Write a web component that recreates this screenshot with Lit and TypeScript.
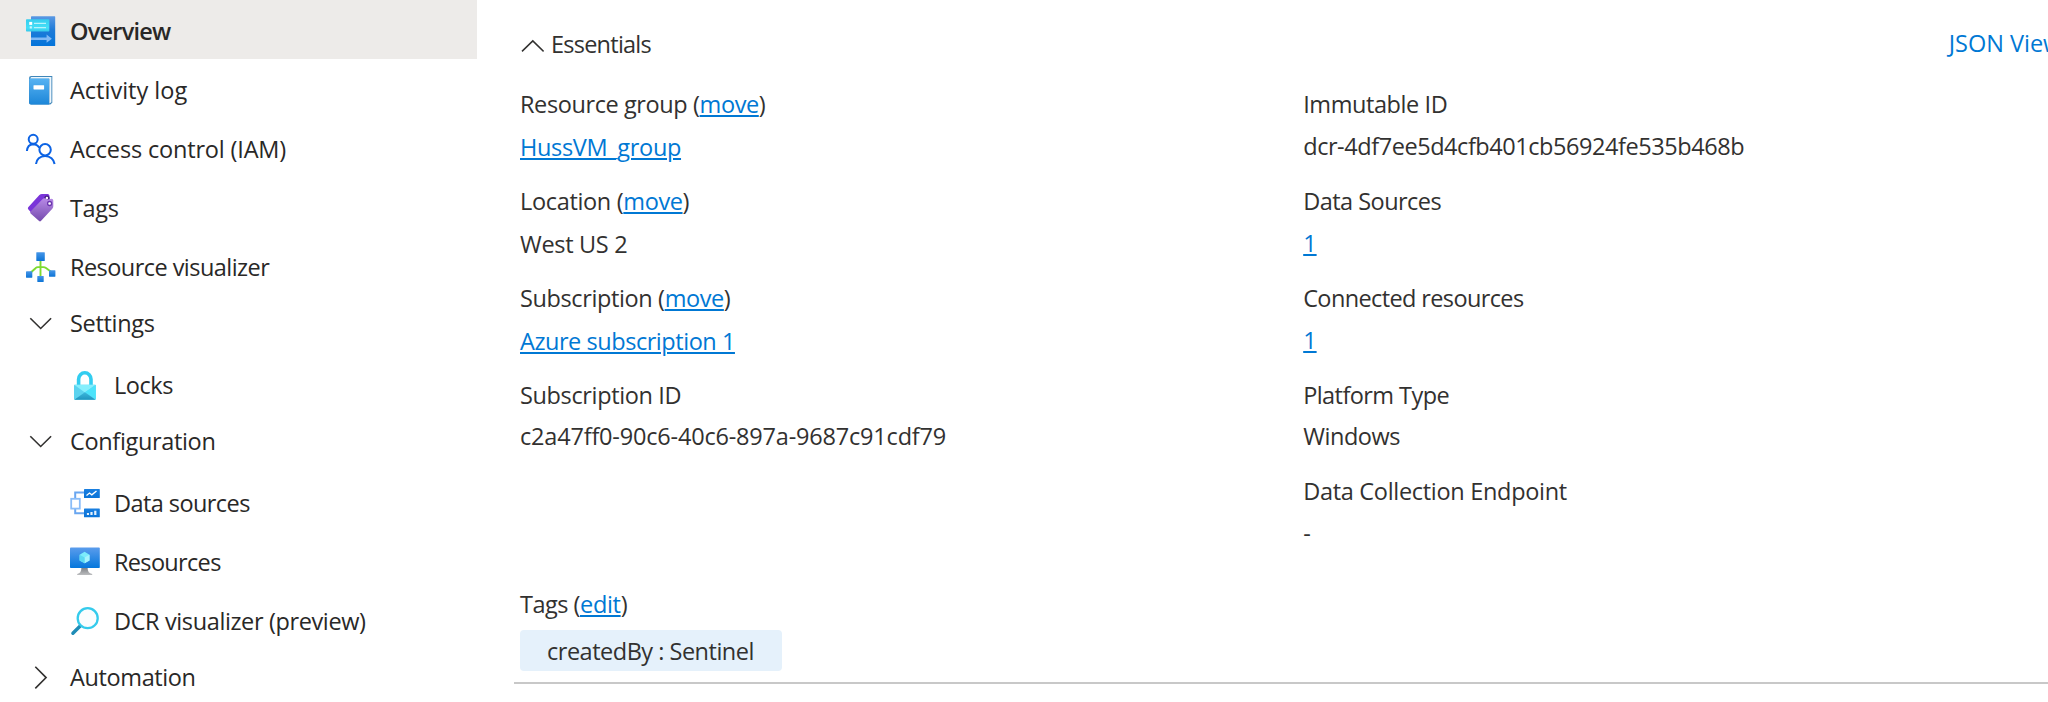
import { LitElement, html, svg, css, nothing, type SVGTemplateResult } from "lit";
import { styleMap } from "lit/directives/style-map.js";

const icons: Record<string, SVGTemplateResult> = {
  overview: svg`
    <defs>
      <linearGradient id="g" x1="0" y1="0" x2="0" y2="1"><stop offset="0" stop-color="#5a98e3"/><stop offset=".45" stop-color="#1f7bd8"/><stop offset="1" stop-color="#0374da"/></linearGradient>
      <linearGradient id="c" x1="0" y1="0" x2="0" y2="1"><stop offset="0" stop-color="#36cdee"/><stop offset=".7" stop-color="#45e0f8"/><stop offset="1" stop-color="#36c8ea"/></linearGradient>
    </defs>
    <rect x="5" y=".3" width="24.2" height="29.7" rx=".6" fill="url(#g)"/>
    <rect x="0" y="3.3" width="23.3" height="12.2" rx=".7" fill="url(#c)"/>
    <rect x="3.2" y="5.9" width="3" height="3" fill="#fff"/>
    <rect x="3.7" y="10.3" width="2.2" height="2.2" fill="#c9f6fd"/>
    <path d="M8 7.4H20M8 11.6H20" stroke="#b8f3fc" stroke-width="1.3"/>
    <path d="M5 21.5H20.6V18.6L25.9 22.7L20.6 26.8V24H5Z" fill="#7fb8f5"/>`,
  log: svg`
    <defs><linearGradient id="g" x1="0" y1="0" x2="0" y2="1"><stop offset="0" stop-color="#56b2f2"/><stop offset="1" stop-color="#1c86d8"/></linearGradient></defs>
    <path d="M5.2 1H26.3V27.8L24.3 29.6H5Q3 29.6 3 27.6V3.2Q3 1 5.2 1Z" fill="#3f86b9"/>
    <path d="M5.3 2.1H25.4V27.2L23.4 28.6V3.8H4.3Q4.3 2.5 5.3 2.1Z" fill="#eef6fc"/>
    <path d="M3.2 3.6H23V29.6H5Q3.2 29.6 3.2 27.8Z" fill="url(#g)"/>
    <rect x="7.5" y="10.2" width="10.6" height="4.3" rx=".4" fill="#fff"/>`,
  people: svg`
    <g fill="none" stroke="#0c63e4" stroke-width="2">
      <circle cx="7.2" cy="5.3" r="4.5"/>
      <path d="M.9 17C1.2 13.2 3.5 10.4 7.2 10.2C10 10.2 12 11.6 13.3 13.8"/>
      <circle cx="19.1" cy="15.8" r="5.7"/>
      <path d="M10 30C10.4 25.4 14 22 19.1 22S27.9 25.4 28.6 30"/>
    </g>`,
  tags: svg`
    <defs><linearGradient id="g" x1="0" y1="0" x2="0" y2="1"><stop offset="0" stop-color="#b88ae6"/><stop offset="1" stop-color="#744aad"/></linearGradient></defs>
    <path d="M2.2 14.2L13.4 2.1Q14.4 1 16 1H21.7Q23.3 1 23.4 2.6L23.8 7L6 20.4L2.2 16.2Q1.5 15.2 2.2 14.2Z" fill="#7a35d9"/>
    <circle cx="20.9" cy="5" r="1.9" fill="#fff" stroke="#431f80" stroke-width="1.4"/>
    <path d="M4.6 18.6L16.4 6.3Q17.4 5.2 19 5.3L22 6.5L25.5 5.8Q27.3 6 27.3 7.6V13.2Q27.3 14.6 26.3 15.7L14.9 28.1Q14 29 13.1 28.1L4.6 20.4Q3.8 19.5 4.6 18.6Z" fill="url(#g)"/>
    <circle cx="23.6" cy="10.5" r="2" fill="#fff" stroke="#6b36ae" stroke-width="1.3"/>`,
  visualizer: svg`
    <defs><linearGradient id="g" x1="0" y1="0" x2="0" y2="1"><stop offset="0" stop-color="#4796e8"/><stop offset="1" stop-color="#0c74d6"/></linearGradient></defs>
    <path d="M14.5 9V24M4.8 20.5L9.5 16.2Q10.6 15.1 12 15.1H17.3Q18.8 15.1 20 16L25 19.8" fill="none" stroke="#7ddb2f" stroke-width="1.9"/>
    <rect x="10.3" y=".3" width="8.5" height="8.6" rx=".4" fill="url(#g)"/>
    <rect x="0" y="19.3" width="6.3" height="6.4" rx=".4" fill="url(#g)"/>
    <rect x="23" y="18.3" width="6.4" height="6.4" rx=".4" fill="url(#g)"/>
    <rect x="11.3" y="23.9" width="6.4" height="6.1" rx=".4" fill="url(#g)"/>`,
  down: svg`<path d="M4.3 10.3L14.7 20.5L25.1 10.3" fill="none" stroke="#323130" stroke-width="1.6"/>`,
  right: svg`<path d="M9.3 4.8L20.1 15.6L9.3 26.4" fill="none" stroke="#323130" stroke-width="1.6"/>`,
  lock: svg`
    <defs><linearGradient id="g" x1="0" y1="0" x2="0" y2="1"><stop offset="0" stop-color="#3cb8dc"/><stop offset="1" stop-color="#2095bf"/></linearGradient></defs>
    <path d="M8.6 15.5V9.2A6.2 6.4 0 0 1 21 9.2V15.5" fill="none" stroke="#32cdf0" stroke-width="3.6"/>
    <rect x="4" y="14.8" width="21.8" height="15" rx=".7" fill="#5bd3ef"/>
    <path d="M4.2 14.8H25.6L14.9 22.4Z" fill="#86effd"/>
    <path d="M25.8 15V29.6L14.9 22.3Z" fill="#4ce3fb"/>
    <path d="M4.3 29.8L14.9 22.2L25.5 29.8Z" fill="url(#g)"/>`,
  sources: svg`
    <defs><linearGradient id="g" x1="0" y1="0" x2="0" y2="1"><stop offset="0" stop-color="#1a7fe0"/><stop offset="1" stop-color="#0a74d8"/></linearGradient></defs>
    <path d="M14.5 4.6H5.2V10M5.2 21V25.2H14.5" fill="none" stroke="#69a6f0" stroke-width="2"/>
    <rect x="1.2" y="10.8" width="8.6" height="9.8" fill="#fff" stroke="#8abdf8" stroke-width="1.8"/>
    <rect x="14" y="1" width="15.8" height="9" rx=".6" fill="url(#g)"/>
    <rect x="14" y="20.5" width="15.8" height="8.8" rx=".6" fill="url(#g)"/>
    <path d="M16.5 7.4L19.5 5.1L21.8 6.8L26.5 2.9" fill="none" stroke="#fff" stroke-width="1.3"/>
    <path d="M16.9 25h2.1v2.1h-2.1zM20.4 24h2.2v3.1h-2.2zM24.2 22.8h2.2v4.3h-2.2z" fill="#e6f2fd"/>`,
  monitor: svg`
    <defs>
      <linearGradient id="g" x1="0" y1="0" x2="0" y2="1"><stop offset="0" stop-color="#5a9cec"/><stop offset="1" stop-color="#0577dc"/></linearGradient>
      <linearGradient id="s" x1="0" y1="0" x2="0" y2="1"><stop offset="0" stop-color="#808387"/><stop offset="1" stop-color="#bcbdbf"/></linearGradient>
    </defs>
    <path d="M11.4 20.8H17.6Q17.6 26.6 22.2 26.9V28.1H7.2V26.9Q11.4 26.6 11.4 20.8Z" fill="url(#s)"/>
    <rect x="0" y=".6" width="29.8" height="20.4" rx=".8" fill="url(#g)"/>
    <path d="M14.6 4.8L19.5 7.7V13.4L14.6 16.3L9.6 13.4V7.7Z" fill="#7cebfb"/>
    <path d="M14.6 10.5L19.5 7.7V13.4L14.6 16.3Z" fill="#a6f3fd"/>
    <path d="M14.6 10.5L9.6 7.7V13.4L14.6 16.3Z" fill="#5cd9f2"/>`,
  magnifier: svg`
    <path d="M10.2 20L2.9 27.3" stroke="#1f8cb6" stroke-width="3.4" stroke-linecap="round"/>
    <circle cx="17.7" cy="12.2" r="10" fill="#fafdfe" stroke="#35cbec" stroke-width="2.3"/>`,
};

interface Entry { icon: string; text: string; ls: number; kind?: "active" | "sub" | "head" }
const menu: Entry[] = [
  { icon: "overview", text: "Overview", ls: -0.77, kind: "active" },
  { icon: "log", text: "Activity log", ls: 0 },
  { icon: "people", text: "Access control (IAM)", ls: -0.17 },
  { icon: "tags", text: "Tags", ls: -0.33 },
  { icon: "visualizer", text: "Resource visualizer", ls: -0.55 },
  { icon: "down", text: "Settings", ls: -0.32, kind: "head" },
  { icon: "lock", text: "Locks", ls: -0.46, kind: "sub" },
  { icon: "down", text: "Configuration", ls: -0.34, kind: "head" },
  { icon: "sources", text: "Data sources", ls: -0.57, kind: "sub" },
  { icon: "monitor", text: "Resources", ls: -0.67, kind: "sub" },
  { icon: "magnifier", text: "DCR visualizer (preview)", ls: -0.38, kind: "sub" },
  { icon: "right", text: "Automation", ls: -0.38, kind: "head" },
];

interface Field { label: string; ls: number; action?: string; value: string; vls: number; link?: boolean; drop?: boolean }
const left: Field[] = [
  { label: "Resource group", ls: -0.4, action: "move", value: "HussVM_group", vls: -0.32, link: true, drop: true },
  { label: "Location", ls: -0.33, action: "move", value: "West US 2", vls: -0.32, drop: true },
  { label: "Subscription", ls: -0.38, action: "move", value: "Azure subscription 1", vls: -0.45, link: true, drop: true },
  { label: "Subscription ID", ls: -0.36, value: "c2a47ff0-90c6-40c6-897a-9687c91cdf79", vls: -0.19 },
];
const right: Field[] = [
  { label: "Immutable ID", ls: -0.42, value: "dcr-4df7ee5d4cfb401cb56924fe535b468b", vls: -0.44 },
  { label: "Data Sources", ls: -0.53, value: "1", vls: 0, link: true },
  { label: "Connected resources", ls: -0.62, value: "1", vls: 0, link: true },
  { label: "Platform Type", ls: -0.57, value: "Windows", vls: -0.45 },
  { label: "Data Collection Endpoint", ls: -0.3, value: "-", vls: 0 },
];

const track = (ls: number) => styleMap({ letterSpacing: `${ls}px` });

class NavItem extends LitElement {
  static properties = { entry: { attribute: false } };
  declare entry: Entry;
  static styles = css`
    :host { display: block; }
    .row { display: flex; align-items: center; box-sizing: border-box; height: 59px; padding-left: 26px; gap: 14px; color: #292827; }
    .active { background: #edebe9; font-weight: 600; }
    .sub { padding-left: 70px; }
    .head { padding-bottom: 6px; }
    svg { width: 30px; height: 30px; margin-top: 3px; flex: none; overflow: visible; }
    .text { line-height: 32px; white-space: nowrap; padding-top: 3px; }
  `;
  render() {
    const e = this.entry;
    return html`<div class="row ${e.kind ?? ""}">
      <svg viewBox="0 0 30 30">${icons[e.icon]}</svg>
      <span class="text" style=${track(e.ls)}>${e.text}</span>
    </div>`;
  }
}
customElements.define("nav-item", NavItem);

class AppRoot extends LitElement {
  static styles = css`
    :host { display: flex; height: 702px; overflow: hidden; background: #fff; color: #323130;
      font: 23.5px/32px "Open Sans", "Noto Sans", sans-serif; }
    nav { width: 477px; flex: none; }
    main { flex: 1; min-width: 0; padding-left: 37px; }
    a { color: #0078d4; text-decoration: underline; text-decoration-thickness: 2px; text-underline-offset: 2px; }
    .bar { display: flex; align-items: center; padding: 28px 0 0 6px; height: 32px; white-space: nowrap; }
    .bar svg { width: 24px; height: 14px; margin: 3px 7px 0 0; }
    .bar .title { letter-spacing: -0.76px; flex: 1; }
    .bar .json { color: #0078d4; text-decoration: none; width: 99.3px; padding-bottom: 2px; }
    .cols { display: grid; grid-template-columns: 783.2px 1fr; padding: 28.4px 0 0 6px; }
    .field { height: 96.75px; white-space: nowrap; }
    .value { margin-top: 9.8px; }
    .drop { margin-top: 10.8px; }
    .tags { padding: 16.05px 0 0 6px; }
    .chip { display: inline-block; box-sizing: border-box; width: 261.5px; height: 40.5px; margin-top: 10px; padding: 5px 0 0 27px;
      background: #e5f1fb; border-radius: 4px; letter-spacing: -0.49px; vertical-align: top; }
    .rule { height: 2px; background: #c8c8c8; margin-top: 11.4px; }
  `;

  field(f: Field) {
    return html`<div class="field">
      <div style=${track(f.ls)}>${f.label}${f.action
        ? html` (<a style=${track(-0.4)}>${f.action}</a>)`
        : nothing}</div>
      <div class="value ${f.drop ? "drop" : ""}" style=${track(f.vls)}>${f.link ? html`<a>${f.value}</a>` : f.value}</div>
    </div>`;
  }

  render() {
    return html`
      <nav>${menu.map((e) => html`<nav-item .entry=${e}></nav-item>`)}</nav>
      <main>
        <div class="bar">
          <svg viewBox="0 0 24 14"><path d="M2 12.4L12.8 1.9L23.6 12.4" fill="none" stroke="#323130" stroke-width="1.5"/></svg>
          <span class="title">Essentials</span>
          <a class="json">JSON View</a>
        </div>
        <div class="cols">
          <div>${left.map((f) => this.field(f))}</div>
          <div>${right.map((f) => this.field(f))}</div>
        </div>
        <div class="tags">
          <div style=${track(-0.5)}>Tags (<a style=${track(-0.3)}>edit</a>)</div>
          <span class="chip">createdBy : Sentinel</span>
        </div>
        <div class="rule"></div>
      </main>`;
  }
}
customElements.define("app-root", AppRoot);
